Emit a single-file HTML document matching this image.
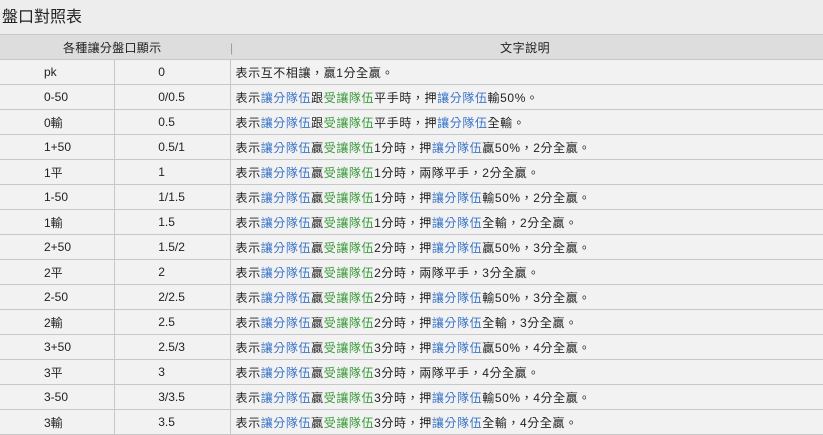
<!DOCTYPE html>
<html><head><meta charset="utf-8"><style>
body{margin:0;background:#ededed;width:823px;height:435px;overflow:hidden;font-family:"Liberation Sans","Noto Sans CJK TC",sans-serif;color:#222;font-size:12px}
h1{position:absolute;left:2px;top:3px;margin:0;font-size:16px;font-weight:normal;color:#222}
table{position:absolute;left:0;top:34px;width:860px;border-collapse:collapse;}
td,th{height:24px;padding:0;border-top:1px solid #c8c8c8;border-bottom:1px solid #c8c8c8;white-space:nowrap}
th{background:#dddddd;font-weight:normal}
tr.r td{background:#f2f2f2}
td.a{width:114px;border-right:1px solid #c8c8c8;padding-left:0}
td.a span{margin-left:44px}
td.b{width:114px;border-right:1px solid #c8c8c8}
td.b span{margin-left:43px}
td.c{padding-left:5px;letter-spacing:0.6px}
.u{color:#3a74c8}.g{color:#3a9a3a}
</style></head><body>
<h1>盤口對照表</h1>
<table>
<tr><th colspan="2" style="width:230px;text-align:left"><span style="margin-left:63px;letter-spacing:0.3px">各種讓分盤口顯示</span></th><th style="text-align:left;border-left:0"><span style="color:#999;margin-left:0">|</span><span style="margin-left:267px;letter-spacing:0.5px">文字說明</span></th></tr>
<tr class="r"><td class="a"><span>pk</span></td><td class="b"><span>0</span></td><td class="c">表示互不相讓，贏1分全贏。</td></tr>
<tr class="r"><td class="a"><span>0-50</span></td><td class="b"><span>0/0.5</span></td><td class="c">表示<span class="u">讓分隊伍</span>跟<span class="g">受讓隊伍</span>平手時，押<span class="u">讓分隊伍</span>輸50%。</td></tr>
<tr class="r"><td class="a"><span>0輸</span></td><td class="b"><span>0.5</span></td><td class="c">表示<span class="u">讓分隊伍</span>跟<span class="g">受讓隊伍</span>平手時，押<span class="u">讓分隊伍</span>全輸。</td></tr>
<tr class="r"><td class="a"><span>1+50</span></td><td class="b"><span>0.5/1</span></td><td class="c">表示<span class="u">讓分隊伍</span>贏<span class="g">受讓隊伍</span>1分時，押<span class="u">讓分隊伍</span>贏50%，2分全贏。</td></tr>
<tr class="r"><td class="a"><span>1平</span></td><td class="b"><span>1</span></td><td class="c">表示<span class="u">讓分隊伍</span>贏<span class="g">受讓隊伍</span>1分時，兩隊平手，2分全贏。</td></tr>
<tr class="r"><td class="a"><span>1-50</span></td><td class="b"><span>1/1.5</span></td><td class="c">表示<span class="u">讓分隊伍</span>贏<span class="g">受讓隊伍</span>1分時，押<span class="u">讓分隊伍</span>輸50%，2分全贏。</td></tr>
<tr class="r"><td class="a"><span>1輸</span></td><td class="b"><span>1.5</span></td><td class="c">表示<span class="u">讓分隊伍</span>贏<span class="g">受讓隊伍</span>1分時，押<span class="u">讓分隊伍</span>全輸，2分全贏。</td></tr>
<tr class="r"><td class="a"><span>2+50</span></td><td class="b"><span>1.5/2</span></td><td class="c">表示<span class="u">讓分隊伍</span>贏<span class="g">受讓隊伍</span>2分時，押<span class="u">讓分隊伍</span>贏50%，3分全贏。</td></tr>
<tr class="r"><td class="a"><span>2平</span></td><td class="b"><span>2</span></td><td class="c">表示<span class="u">讓分隊伍</span>贏<span class="g">受讓隊伍</span>2分時，兩隊平手，3分全贏。</td></tr>
<tr class="r"><td class="a"><span>2-50</span></td><td class="b"><span>2/2.5</span></td><td class="c">表示<span class="u">讓分隊伍</span>贏<span class="g">受讓隊伍</span>2分時，押<span class="u">讓分隊伍</span>輸50%，3分全贏。</td></tr>
<tr class="r"><td class="a"><span>2輸</span></td><td class="b"><span>2.5</span></td><td class="c">表示<span class="u">讓分隊伍</span>贏<span class="g">受讓隊伍</span>2分時，押<span class="u">讓分隊伍</span>全輸，3分全贏。</td></tr>
<tr class="r"><td class="a"><span>3+50</span></td><td class="b"><span>2.5/3</span></td><td class="c">表示<span class="u">讓分隊伍</span>贏<span class="g">受讓隊伍</span>3分時，押<span class="u">讓分隊伍</span>贏50%，4分全贏。</td></tr>
<tr class="r"><td class="a"><span>3平</span></td><td class="b"><span>3</span></td><td class="c">表示<span class="u">讓分隊伍</span>贏<span class="g">受讓隊伍</span>3分時，兩隊平手，4分全贏。</td></tr>
<tr class="r"><td class="a"><span>3-50</span></td><td class="b"><span>3/3.5</span></td><td class="c">表示<span class="u">讓分隊伍</span>贏<span class="g">受讓隊伍</span>3分時，押<span class="u">讓分隊伍</span>輸50%，4分全贏。</td></tr>
<tr class="r"><td class="a"><span>3輸</span></td><td class="b"><span>3.5</span></td><td class="c">表示<span class="u">讓分隊伍</span>贏<span class="g">受讓隊伍</span>3分時，押<span class="u">讓分隊伍</span>全輸，4分全贏。</td></tr>
</table>
</body></html>
